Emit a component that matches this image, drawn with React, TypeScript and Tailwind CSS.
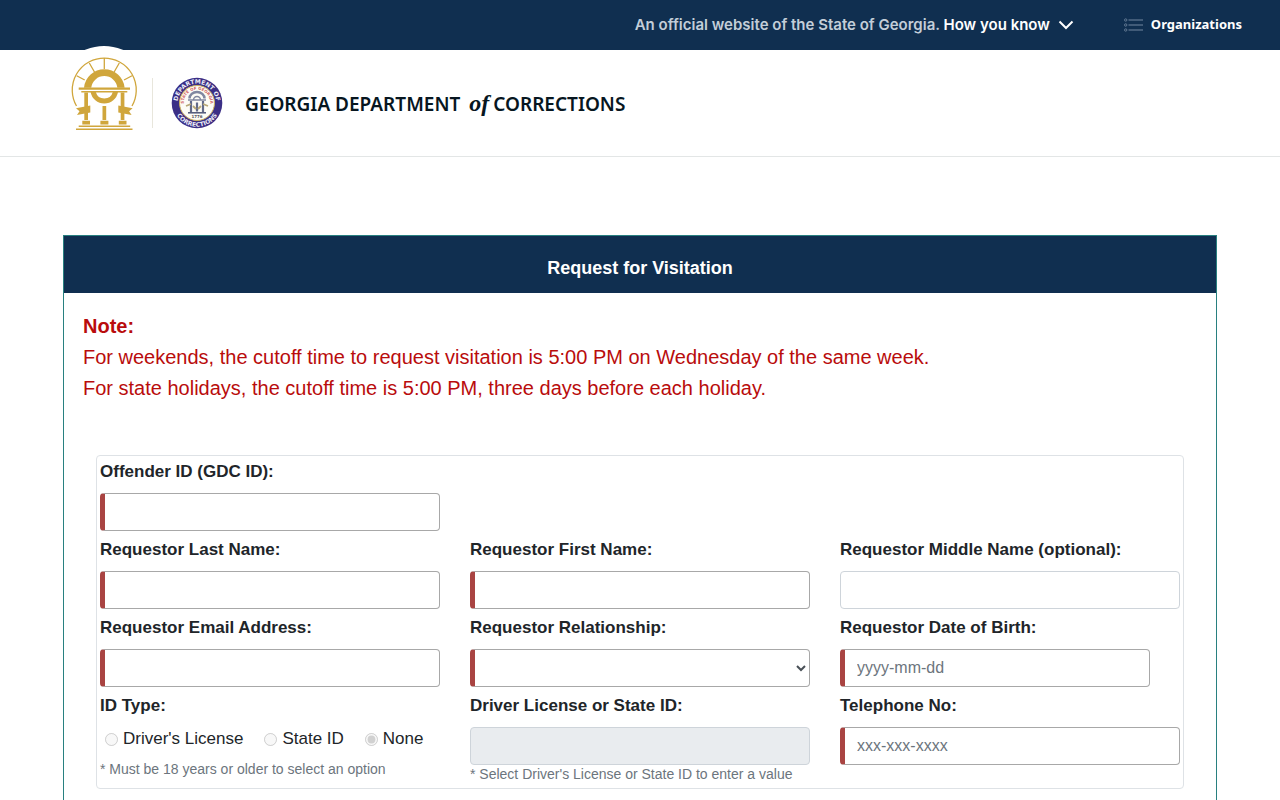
import { useState } from 'react';
import type { InputHTMLAttributes, ReactNode } from 'react';
import clsx from 'clsx';

const ID_TYPES = ["Driver's License", 'State ID', 'None'];

function StateLogo() {
  return (
    <svg width="94" height="94" viewBox="0 0 94 94" aria-hidden="true">
      <circle cx="47" cy="47" r="47" fill="#fff" />
      <g transform="translate(9 -2)" fill="#d0a63c">
        <g fill="none" stroke="#d0a63c" strokeWidth="1.3">
          <path d="M10.5 62A32 32 0 1 1 66 62" />
          <path d="M38.3 14v11M23.3 19l5.300 9.300M53.300 19l-5.300 9.300M10.700 31.700l8 4.300M66 31.700l-8 4.300" />
        </g>
        <path d="M18 43.700a20.400 20.400 0 0 1 40.600 0h-7.200a13.200 13.200 0 0 0-26.200 0z" />
        <path d="M24.600 48a13.900 13.900 0 0 0 27.400 0h-5.200a8.800 8.800 0 0 1-17 0z" />
        <path d="M12.700 43.600h51.300v2.200H12.700zM15.300 47h46v1.600h-46z" />
        <path d="M18.300 48.500H22V64h-3.700zM54.700 48.500h3.700V64h-3.700zM18.300 67H22v9h-3.700zM54.700 67h3.700v9h-3.700zM36.500 62h3.700v14h-3.700z" />
        <path d="M16.300 76.700H24v3.700h-7.700zM34.400 76.700h8v3.700h-8zM52.800 76.700h7.700v3.700h-7.700z" />
        <path d="M12.700 81.600h51.500v1.500H12.700zM10 84.600h56.500v1.500H10z" />
        <path d="M10 64.200l14.300-2.700v7L11 71l2.500-3.700zM66.600 64.200l-14.300-2.700v7L65.600 71l-2.500-3.700z" />
      </g>
    </svg>
  );
}

function DepartmentSeal() {
  return (
    <svg width="52" height="52" viewBox="0 0 52 52" role="img" aria-label="Department seal">
      <defs>
        <path id="seal-top" d="M7.500 31.500A19.300 19.300 0 1 1 44.500 31.500" />
        <path id="seal-bottom" d="M2.500 29A23.700 23.700 0 0 0 49.500 29" />
        <path id="seal-inner" d="M13 28.800A13.300 13.300 0 1 1 39 28.800" />
      </defs>
      <circle cx="26" cy="26" r="25.300" fill="#3b2f86" />
      <circle cx="26" cy="26" r="17.500" fill="#fdfcf6" stroke="#cdb25f" strokeWidth="1" />
      <g fontFamily="DejaVu Sans, sans-serif" fontWeight="700" textAnchor="middle">
        <text fontSize="6" fill="#eeeef8">
          <textPath href="#seal-top" startOffset="50%">DEPARTMENT OF</textPath>
        </text>
        <text fontSize="6" fill="#eeeef8">
          <textPath href="#seal-bottom" startOffset="50%">CORRECTIONS</textPath>
        </text>
        <text fontSize="4" fill="#d0605c">
          <textPath href="#seal-inner" startOffset="50%">STATE OF GEORGIA</textPath>
        </text>
        <text x="26" y="41" fontSize="4" fill="#55555f">1776</text>
      </g>
      <g fill="none" stroke="#8087a0">
        <path d="M18.500 21.500a7.500 6.500 0 0 1 15 0" strokeWidth="2.500" />
        <path d="M22.500 23a3.500 3.500 0 0 1 7 0" strokeWidth="1.500" />
        <path d="M17 23h18" strokeWidth="1.500" />
        <path d="M20 24v11M26 25.500v9M32 24v11" strokeWidth="2.200" stroke="#626b8a" />
        <path d="M17 35.800h18" strokeWidth="1.500" stroke="#4e5678" />
        <path d="M15 29l5-2M37 29l-5-2M22 29l3 3M30 29l-3 3" strokeWidth="1.800" stroke="#b8a878" />
      </g>
    </svg>
  );
}

function TopBar() {
  return (
    <div className="flex h-[50px] items-center justify-end bg-[#102f50] pr-[38px] text-white">
      <button type="button" className="flex items-center gap-2 font-['Inter'] text-[15px] leading-5 font-semibold">
        <span>
          <span className="text-[#c3ced9]">An official website of the State of Georgia.</span> How you know
        </span>
        <svg width="16" height="10" viewBox="0 0 16 10" fill="none" stroke="currentColor" strokeWidth="2" aria-hidden="true">
          <path d="M1.500 1.500l6.500 6.500 6.500-6.500" />
        </svg>
      </button>
      <a href="#organizations" className="ml-[50px] flex items-center gap-2 pb-[3px] font-['Noto_Sans'] text-[13px] leading-5 font-bold">
        <svg width="19" height="14" viewBox="0 0 19 14" className="mt-[3px]" fill="none" stroke="#7288a0" aria-hidden="true">
          <path d="M4.500 2H19M4.500 7H19M4.500 12H19" strokeWidth="1" />
          <circle cx="1.700" cy="2" r="1.200" strokeWidth=".8" />
          <circle cx="1.700" cy="7" r="1.200" strokeWidth=".8" />
          <circle cx="1.700" cy="12" r="1.200" strokeWidth=".8" />
        </svg>
        Organizations
      </a>
    </div>
  );
}

function SiteHeader() {
  return (
    <header className="flex items-center border-b border-[#e3e6e6] pl-[57px]">
      <div className="-mt-1 mb-4">
        <StateLogo />
      </div>
      <div className="ml-px h-[50px] w-px bg-[#e8e6dc]" />
      <div className="ml-[18px]">
        <DepartmentSeal />
      </div>
      <h1 className="ml-[22px] font-['Noto_Sans'] text-[19px] leading-6 font-semibold text-[#07161f]">
        GEORGIA DEPARTMENT <em className="mx-1 font-['Liberation_Serif'] text-[24px] font-bold">of</em>
        CORRECTIONS
      </h1>
    </header>
  );
}

interface FieldProps {
  id: string;
  label: string;
  children: ReactNode;
}

function Field({ id, label, children }: FieldProps) {
  return (
    <div>
      <label htmlFor={id} className="mb-[9px] block text-[17px] leading-6 font-bold">
        {label}
      </label>
      {children}
    </div>
  );
}

const controlBase = 'block h-[38px] w-full rounded border px-3 text-[16px] placeholder:text-[#6c757d]';
const requiredBorder = 'border-[#a8a8a8] border-l-[5px] border-l-[#a94442] bg-white';

function TextInput({ required, disabled, className, ...rest }: InputHTMLAttributes<HTMLInputElement>) {
  return (
    <input
      type="text"
      required={required}
      disabled={disabled}
      className={clsx(
        controlBase,
        required ? requiredBorder : 'border-[#ced4da]',
        disabled ? 'bg-[#e9ecef]' : 'bg-white',
        className
      )}
      {...rest}
    />
  );
}

export default function App() {
  const [relationship, setRelationship] = useState('');

  return (
    <div className="bg-white font-['Liberation_Sans',Arial,sans-serif] text-[#212529]">
      <TopBar />
      <SiteHeader />

      <main className="px-[63px] pt-[78px]">
        <section className="border border-[#288080] pb-10">
          <h2 className="bg-[#102f50] pt-5 pb-[13px] text-center text-[18px] leading-6 font-bold text-white">
            Request for Visitation
          </h2>

          <div className="px-[19px] pt-[18px] text-[20px] leading-[31px] text-[#b90c0c]">
            <p className="font-bold">Note:</p>
            <p>For weekends, the cutoff time to request visitation is 5:00 PM on Wednesday of the same week.</p>
            <p>For state holidays, the cutoff time is 5:00 PM, three days before each holiday.</p>
          </div>

          <form className="mx-8 mt-[51px] grid grid-cols-3 gap-x-[30px] gap-y-[7px] rounded border border-[#dee2e6] px-[3px] pt-1 pb-[5px]">
            <div className="col-span-3 grid grid-cols-3 gap-x-[30px]">
              <Field id="offender-id" label="Offender ID (GDC ID):">
                <TextInput id="offender-id" required />
              </Field>
            </div>

            <Field id="last-name" label="Requestor Last Name:">
              <TextInput id="last-name" required />
            </Field>
            <Field id="first-name" label="Requestor First Name:">
              <TextInput id="first-name" required />
            </Field>
            <Field id="middle-name" label="Requestor Middle Name (optional):">
              <TextInput id="middle-name" />
            </Field>

            <Field id="email" label="Requestor Email Address:">
              <TextInput id="email" required />
            </Field>
            <Field id="relationship" label="Requestor Relationship:">
              <select
                id="relationship"
                required
                value={relationship}
                onChange={e => setRelationship(e.target.value)}
                className="block h-[38px] w-full rounded border border-l-[5px] border-[#a8a8a8] border-l-[#a94442] bg-white text-[16px] text-[#495057]"
              >
                <option value=""></option>
              </select>
            </Field>
            <Field id="birth-date" label="Requestor Date of Birth:">
              <div className="pr-[30px]">
                <TextInput id="birth-date" required placeholder="yyyy-mm-dd" />
              </div>
            </Field>

            <fieldset>
              <legend className="mb-[9px] text-[17px] leading-6 font-bold">ID Type:</legend>
              <div className="flex gap-[21px] pl-[5px] text-[17px] leading-6">
                {ID_TYPES.map(type => (
                  <label key={type} className="flex items-center gap-[5px]">
                    <input type="radio" name="id-type" disabled defaultChecked={type === 'None'} />
                    {type}
                  </label>
                ))}
              </div>
              <p className="mt-[9px] text-[14px] leading-[18px] text-[#6c757d]">* Must be 18 years or older to select an option</p>
            </fieldset>
            <Field id="license" label="Driver License or State ID:">
              <TextInput id="license" disabled />
              <p className="text-[14px] leading-[18px] text-[#6c757d]">* Select Driver's License or State ID to enter a value</p>
            </Field>
            <Field id="telephone" label="Telephone No:">
              <TextInput id="telephone" required placeholder="xxx-xxx-xxxx" />
            </Field>
          </form>
        </section>
      </main>
    </div>
  );
}
